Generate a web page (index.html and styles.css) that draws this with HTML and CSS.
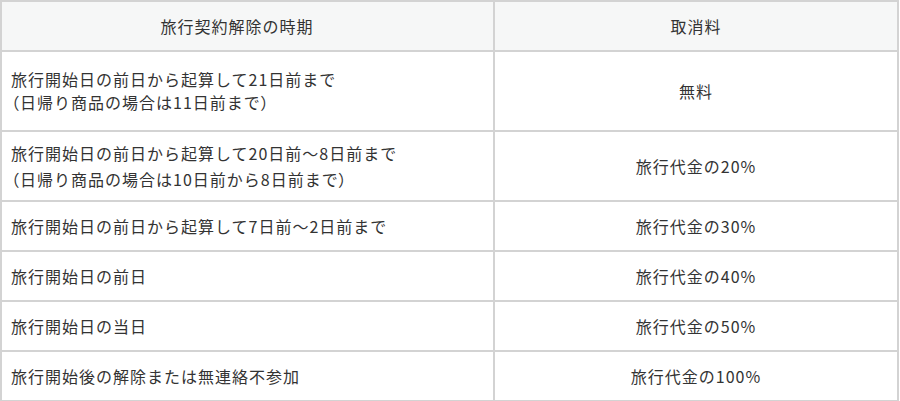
FILE: index.html
```html
<!DOCTYPE html>
<html lang="ja">
<head>
<meta charset="utf-8">
<title>取消料</title>
<link rel="stylesheet" href="styles.css">
</head>
<body>
<table class="fee-table">
  <colgroup>
    <col class="col-period">
    <col class="col-fee">
  </colgroup>
  <thead>
    <tr class="row-head">
      <th class="head-period">旅行契約解除の時期</th>
      <th class="head-fee">取消料</th>
    </tr>
  </thead>
  <tbody>
    <tr class="row-tall">
      <td class="period">旅行開始日の前日から起算して21日前まで<br><span class="paren">（</span>日帰り商品の場合は11日前まで<span class="paren">）</span></td>
      <td class="fee">無料</td>
    </tr>
    <tr class="row-mid">
      <td class="period">旅行開始日の前日から起算して20日前～8日前まで<br><span class="paren">（</span>日帰り商品の場合は10日前から8日前まで<span class="paren">）</span></td>
      <td class="fee">旅行代金の20%</td>
    </tr>
    <tr class="row-single">
      <td class="period">旅行開始日の前日から起算して7日前～2日前まで</td>
      <td class="fee">旅行代金の30%</td>
    </tr>
    <tr class="row-single">
      <td class="period">旅行開始日の前日</td>
      <td class="fee">旅行代金の40%</td>
    </tr>
    <tr class="row-single">
      <td class="period">旅行開始日の当日</td>
      <td class="fee">旅行代金の50%</td>
    </tr>
    <tr class="row-single">
      <td class="period">旅行開始後の解除または無連絡不参加</td>
      <td class="fee">旅行代金の100%</td>
    </tr>
  </tbody>
</table>
</body>
</html>
```

FILE: styles.css
```css
html, body {
  margin: 0;
  padding: 0;
  background: #ffffff;
}

body {
  font-family: "Noto Sans CJK JP", "Noto Sans", sans-serif;
  font-size: 16px;
  color: #333333;
}

.fee-table {
  width: 899px;
  border-collapse: collapse;
  border-top: 2px solid #c6c6c6;
  border-left: 1px solid #a9a9a9;
  border-right: 2px solid #b4b4b4;
  border-bottom: 2px solid #c6c6c6;
  table-layout: fixed;
}

.col-period {
  width: 493px;
}

.fee-table th,
.fee-table td {
  border: 2px solid #d3d3d3;
  letter-spacing: 1px;
  line-height: 23px;
  font-weight: 400;
  vertical-align: middle;
}

.fee-table th {
  background: #f6f7f7;
  text-align: center;
}

.head-period {
  padding-right: 22px;
}

.row-head {
  height: 50px;
}

.row-tall {
  height: 80px;
}

.row-mid {
  height: 70px;
}

.row-mid .period {
  line-height: 26px;
}

.row-single {
  height: 50px;
}

.period {
  padding: 0 0 0 9px;
  text-align: left;
}

.paren {
  font-feature-settings: "palt";
}

.fee {
  text-align: center;
  padding: 0;
}
```
